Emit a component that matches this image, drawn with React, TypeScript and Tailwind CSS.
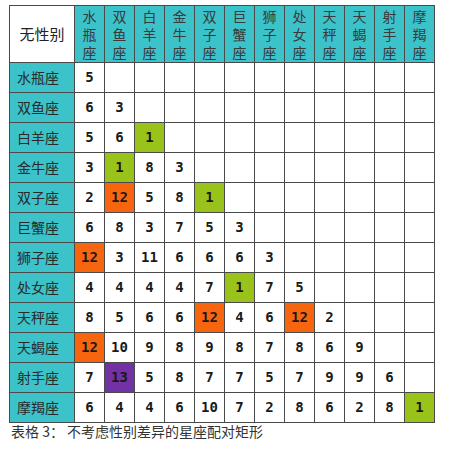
import React from "react";

type Cell = { v: number; c?: "g" | "o" | "p" };

const signs = ["水瓶座", "双鱼座", "白羊座", "金牛座", "双子座", "巨蟹座", "狮子座", "处女座", "天秤座", "天蝎座", "射手座", "摩羯座"];

const g = (v: number): Cell => ({ v, c: "g" });
const o = (v: number): Cell => ({ v, c: "o" });
const p = (v: number): Cell => ({ v, c: "p" });
const n = (v: number): Cell => ({ v });

const data: Cell[][] = [
  [n(5)],
  [n(6), n(3)],
  [n(5), n(6), g(1)],
  [n(3), g(1), n(8), n(3)],
  [n(2), o(12), n(5), n(8), g(1)],
  [n(6), n(8), n(3), n(7), n(5), n(3)],
  [o(12), n(3), n(11), n(6), n(6), n(6), n(3)],
  [n(4), n(4), n(4), n(4), n(7), g(1), n(7), n(5)],
  [n(8), n(5), n(6), n(6), o(12), n(4), n(6), o(12), n(2)],
  [o(12), n(10), n(9), n(8), n(9), n(8), n(7), n(8), n(6), n(9)],
  [n(7), p(13), n(5), n(8), n(7), n(7), n(5), n(7), n(9), n(9), n(6)],
  [n(6), n(4), n(4), n(6), n(10), n(7), n(2), n(8), n(6), n(2), n(8), g(1)],
];

const cjk = { fontFamily: '"Noto Sans CJK SC", "Noto Sans", sans-serif' };
const num = { fontFamily: '"DejaVu Sans Mono", "Liberation Mono", monospace' };

function bgFor(c?: string) {
  if (c === "g") return "bg-[#99c31a]";
  if (c === "o") return "bg-[#f8650f]";
  if (c === "p") return "bg-[#7232a3]";
  return "bg-white";
}

export default function App() {
  return (
    <div className="w-[450px] h-[451px] bg-white pl-[9px] pt-[5px]" style={cjk}>
      <div className="grid w-max grid-cols-[64px_repeat(12,29px)] grid-rows-[56px_repeat(12,29px)] gap-px p-px bg-[#4a4a4a]">
        <div className="bg-white flex items-center justify-center text-[15px] text-[#222]">无性别</div>
        {signs.map((s) => (
          <div key={s} className="bg-[#3cc3ca] flex flex-col items-center justify-center text-[14px] leading-[18px] text-[#3a3a3a]">
            {s.split("").map((ch, i) => (
              <span key={i}>{ch}</span>
            ))}
          </div>
        ))}
        {signs.map((s, r) => (
          <React.Fragment key={s}>
            <div className="bg-[#3cc3ca] flex items-center pl-[7px] text-[14px] text-[#2a2a2a]">{s}</div>
            {signs.map((_, c) => {
              const cell = data[r][c];
              return (
                <div
                  key={c}
                  className={`${bgFor(cell?.c)} flex items-center justify-center text-[14px] font-bold text-[#1a1a1a]`}
                  style={num}
                >
                  {cell ? cell.v : ""}
                </div>
              );
            })}
          </React.Fragment>
        ))}
      </div>
      <div className="pl-[2px] text-[14px] leading-[16px] text-[#333]">表格 3： 不考虑性别差异的星座配对矩形</div>
    </div>
  );
}
